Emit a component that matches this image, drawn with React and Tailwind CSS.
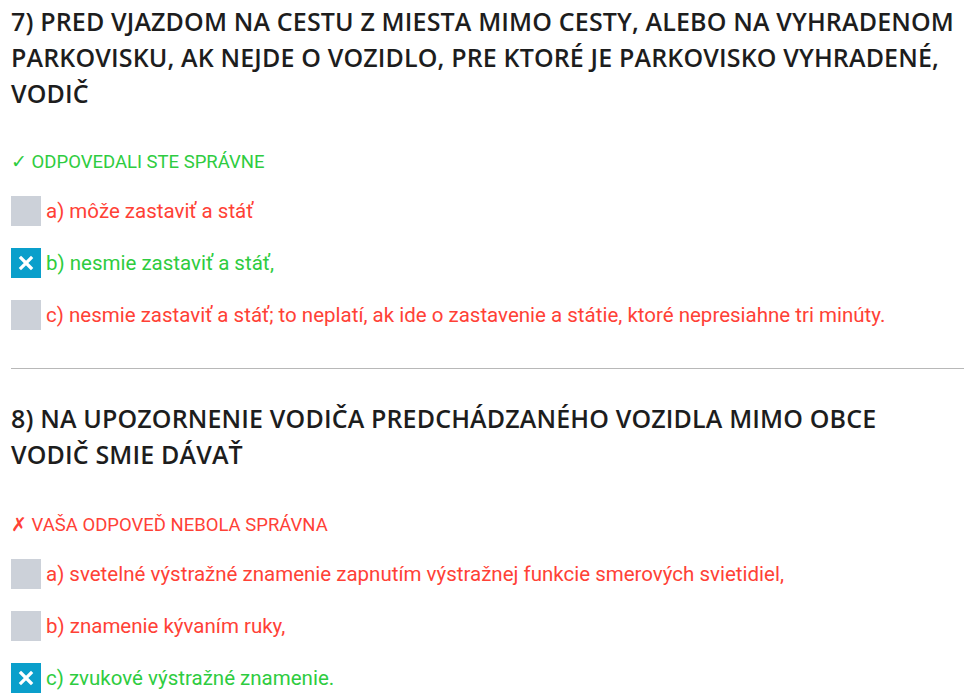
import React from 'react';

const questions = [
  {
    title: '7) PRED VJAZDOM NA CESTU Z MIESTA MIMO CESTY, ALEBO NA VYHRADENOM PARKOVISKU, AK NEJDE O VOZIDLO, PRE KTORÉ JE PARKOVISKO VYHRADENÉ, VODIČ',
    correct: true,
    answers: [
      { text: 'a) môže zastaviť a stáť', right: false, picked: false },
      { text: 'b) nesmie zastaviť a stáť,', right: true, picked: true },
      { text: 'c) nesmie zastaviť a stáť; to neplatí, ak ide o zastavenie a státie, ktoré nepresiahne tri minúty.', right: false, picked: false },
    ],
  },
  {
    title: '8) NA UPOZORNENIE VODIČA PREDCHÁDZANÉHO VOZIDLA MIMO OBCE VODIČ SMIE DÁVAŤ',
    correct: false,
    answers: [
      { text: 'a) svetelné výstražné znamenie zapnutím výstražnej funkcie smerových svietidiel,', right: false, picked: false },
      { text: 'b) znamenie kývaním ruky,', right: false, picked: false },
      { text: 'c) zvukové výstražné znamenie.', right: true, picked: true },
    ],
  },
];

function Box({ picked }) {
  if (!picked) return <span className="w-[30px] h-[30px] shrink-0 bg-[#ccd1d9]" />;
  return (
    <span className="w-[30px] h-[30px] shrink-0 bg-[#0a9fcb] flex items-center justify-center">
      <svg width="16" height="16" viewBox="0 0 16 16">
        <path d="M3 3 L13 13 M13 3 L3 13" stroke="#fff" strokeWidth="3.2" strokeLinecap="square" />
      </svg>
    </span>
  );
}

function Question({ q }) {
  return (
    <div>
      <h2 className="font-['Open_Sans',sans-serif] font-semibold text-[25px] leading-[36px] tracking-[0.15px] text-[#1d1d1d] pt-[3px] pr-[8px]">
        {q.title}
      </h2>
      {q.correct ? (
        <p className="mt-[39px] text-[18.5px] leading-[24px] text-[#2ecc40]">✓ ODPOVEDALI STE SPRÁVNE</p>
      ) : (
        <p className="mt-[41px] text-[18.5px] leading-[24px] text-[#ff4136]">✗ VAŠA ODPOVEĎ NEBOLA SPRÁVNA</p>
      )}
      <div className="mt-[22px] flex flex-col gap-[22px]">
        {q.answers.map((a, i) => (
          <div key={i} className="flex items-center gap-[5px] h-[30px]">
            <Box picked={a.picked} />
            <span className={`text-[20.5px] leading-[30px] ${a.right ? 'text-[#2ecc40]' : 'text-[#ff4136]'}`}>{a.text}</span>
          </div>
        ))}
      </div>
    </div>
  );
}

export default function App() {
  return (
    <div className="w-[964px] h-[697px] overflow-hidden bg-white pl-[11px] font-['Roboto',sans-serif]">
      <Question q={questions[0]} />
      <hr className="mt-[38px] border-0 border-t border-[#b8b8b8]" />
      <div className="mt-[28px]">
        <Question q={questions[1]} />
      </div>
    </div>
  );
}
